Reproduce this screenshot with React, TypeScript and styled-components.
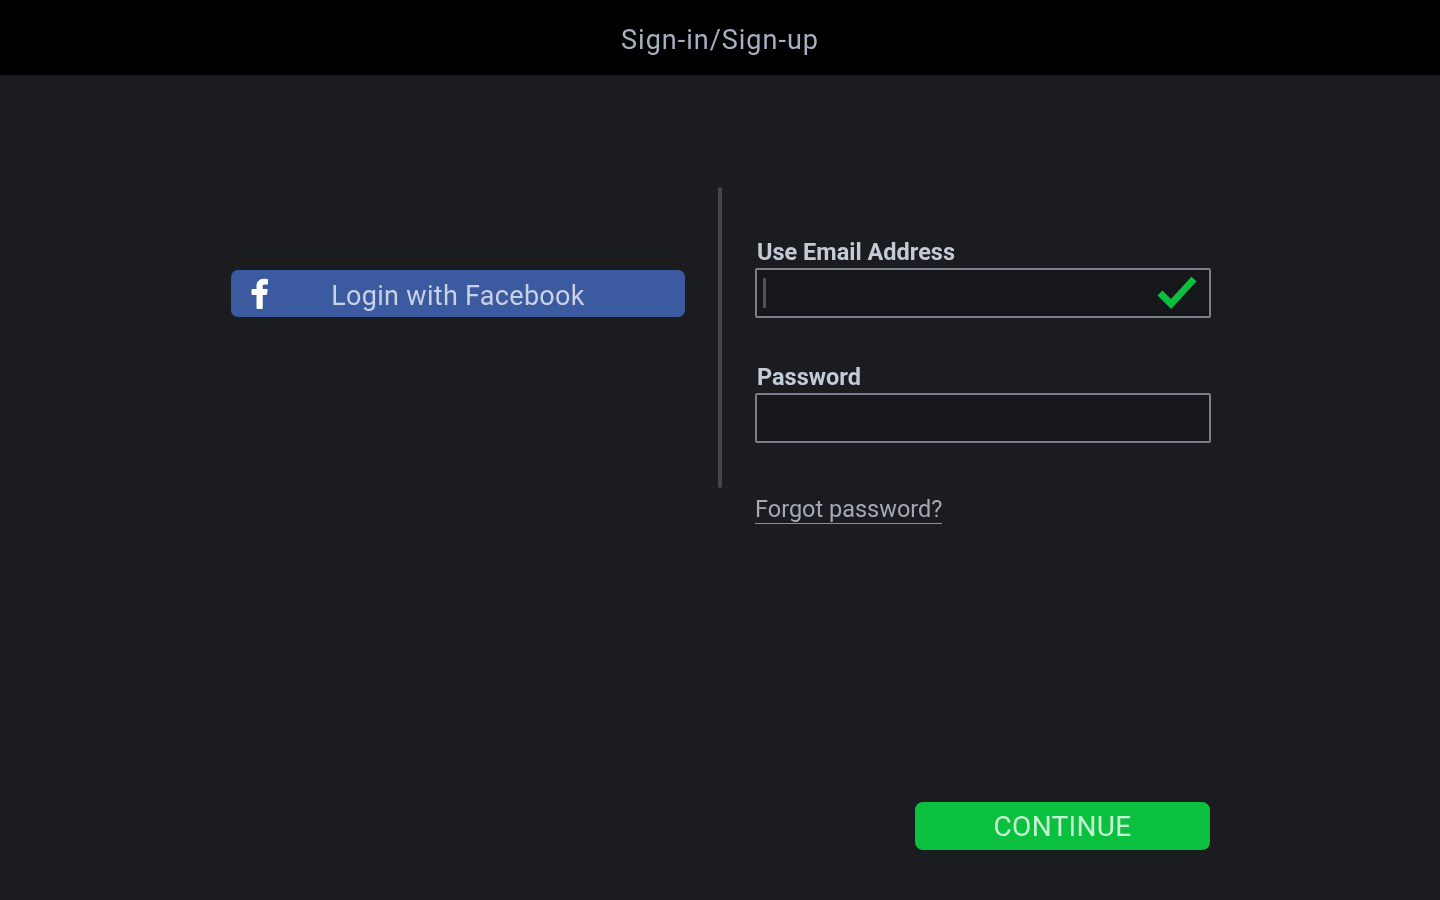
import styled, { createGlobalStyle } from 'styled-components';

const GlobalStyle = createGlobalStyle`
  html, body {
    margin: 0;
    height: 100%;
    background: #1b1c20;
  }
  body {
    font-family: Roboto, "Liberation Sans", sans-serif;
  }
`;

const Page = styled.div`
  width: 1440px;
  height: 900px;
  display: flex;
  flex-direction: column;
  overflow: hidden;
  background: #1b1c20;
`;

const Header = styled.header`
  height: 75px;
  flex: none;
  display: flex;
  align-items: center;
  justify-content: center;
  padding-top: 5px;
  box-sizing: border-box;
  background: #000;
  color: #a7afc0;
  font-size: 27px;
  letter-spacing: 1px;
  filter: blur(0.6px);
`;

const Body = styled.main`
  flex: 1;
  display: flex;
  flex-direction: column;
  padding: 112px 229px 50px 231px;
`;

const Columns = styled.div`
  display: flex;
  align-items: flex-start;
`;

const LeftColumn = styled.section`
  width: 454px;
  padding-top: 83px;
  margin-right: 1px;
`;

const FacebookButton = styled.button`
  width: 100%;
  height: 47px;
  display: grid;
  grid-template-columns: 1fr auto 1fr;
  align-items: center;
  justify-items: start;
  padding: 0 20px;
  border: 0;
  border-radius: 7px;
  background: #3b5aa0;
  color: #c9d2e4;
  font-family: inherit;
  font-size: 27px;
  letter-spacing: 0.3px;
  filter: blur(0.5px);
`;

const ButtonLabel = styled.span`
  padding-top: 4px;
`;

const Divider = styled.div`
  width: 4px;
  height: 301px;
  margin: 0 33px 0 32px;
  border-radius: 2px;
  background: #43464e;
`;

const RightColumn = styled.section`
  width: 456px;
  padding-top: 51px;
  display: flex;
  flex-direction: column;
`;

const Field = styled.div`
  display: flex;
  flex-direction: column;

  & + & {
    margin-top: 45px;
  }
`;

const FieldLabel = styled.label`
  height: 30px;
  padding-left: 2px;
  color: #c3cad8;
  font-size: 23.5px;
  font-weight: 700;
  line-height: 28px;
  filter: blur(0.6px);
`;

const InputBox = styled.div`
  height: 50px;
  box-sizing: border-box;
  display: flex;
  align-items: center;
  justify-content: space-between;
  padding: 0 12px 0 6px;
  border: 2px solid #7b7f8b;
  border-radius: 2px;
  background: #16171a;
  filter: blur(0.5px);
`;

const Caret = styled.span`
  width: 3px;
  height: 30px;
  background: #4e5158;
`;

const CheckIcon = styled.svg`
  width: 40px;
  height: 34px;
`;

const ForgotLink = styled.a`
  align-self: flex-start;
  margin-top: 52px;
  color: #a3a9b5;
  font-size: 23.5px;
  line-height: 28px;
  border-bottom: 1px solid #8b909c;
  filter: blur(0.6px);
`;

const Footer = styled.div`
  margin-top: auto;
  display: flex;
  justify-content: flex-end;
  padding-right: 1px;
`;

const ContinueButton = styled.button`
  width: 295px;
  height: 48px;
  border: 0;
  border-radius: 8px;
  background: #0bbf3f;
  color: #c8f2d4;
  font-family: inherit;
  font-size: 28px;
  letter-spacing: 0.3px;
  filter: blur(0.5px);
`;

export default function App() {
  return (
    <Page>
      <GlobalStyle />
      <Header>Sign-in/Sign-up</Header>
      <Body>
        <Columns>
          <LeftColumn>
            <FacebookButton>
              <svg width="18" height="31" viewBox="0 0 18 30">
                <path
                  fill="#fff"
                  stroke="#fff"
                  strokeWidth="1"
                  d="M6 30V16H1v-5h5V7.5C6 3 8.6.8 12.6.8c1.8 0 3.2.1 3.9.2v4.6h-2.7c-2.1 0-2.6 1-2.6 2.5V11h5l-.7 5h-4.3v14H6z"
                />
              </svg>
              <ButtonLabel>Login with Facebook</ButtonLabel>
            </FacebookButton>
          </LeftColumn>
          <Divider />
          <RightColumn>
            <Field>
              <FieldLabel>Use Email Address</FieldLabel>
              <InputBox>
                <Caret />
                <CheckIcon viewBox="0 0 40 34">
                  <path
                    fill="none"
                    stroke="#0bbf3f"
                    strokeWidth="7"
                    d="M3 17l11 11L37 3"
                  />
                </CheckIcon>
              </InputBox>
            </Field>
            <Field>
              <FieldLabel>Password</FieldLabel>
              <InputBox />
            </Field>
            <ForgotLink>Forgot password?</ForgotLink>
          </RightColumn>
        </Columns>
        <Footer>
          <ContinueButton>CONTINUE</ContinueButton>
        </Footer>
      </Body>
    </Page>
  );
}
